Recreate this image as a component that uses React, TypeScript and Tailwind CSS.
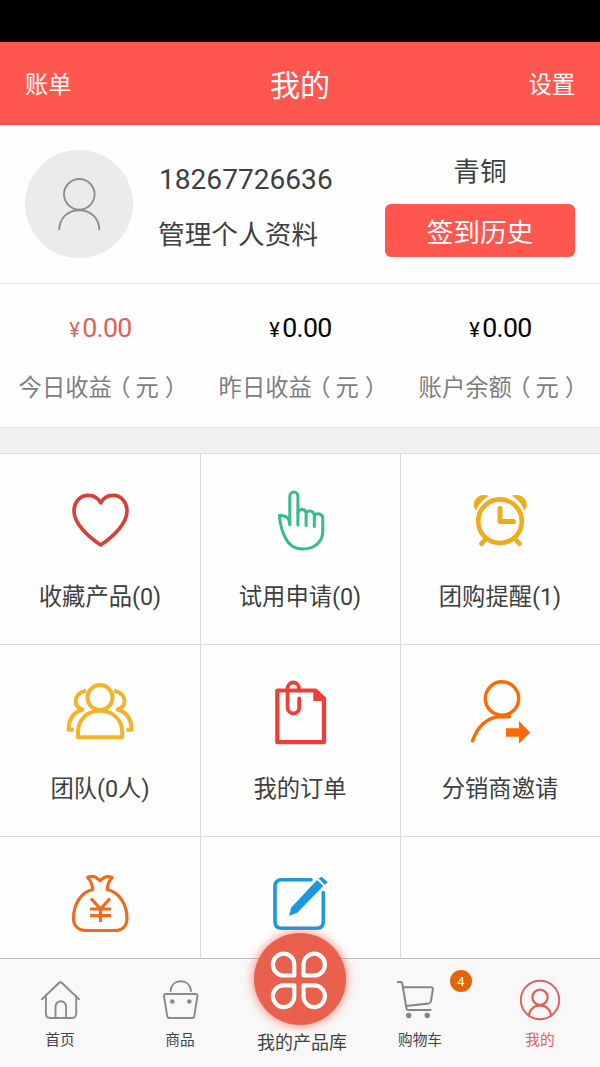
import type { ReactNode } from "react";

const FONT = "font-['Roboto','Noto_Sans_CJK_SC',sans-serif]";

function Glyph({ box, className, children }: { box: string; className: string; children: ReactNode }) {
  return (
    <svg viewBox={box} className={className} fill="none" stroke="currentColor" strokeLinecap="round" strokeLinejoin="round">
      {children}
    </svg>
  );
}

const tiles: { label: string; color: string; box: string; art: ReactNode }[] = [
  {
    label: "收藏产品(0)",
    color: "text-[#d93f38]",
    box: "60 480 80 80",
    art: (
      <path
        strokeWidth="3.6"
        d="M100.7 503C98 497.5 93.5 495.4 88.3 495.4C79.5 495.4 74 502.6 74 511C74 523.5 88 536.5 100.7 545C113.5 536.5 127 523.5 127 511C127 502.6 121.8 495.4 113 495.4C107.9 495.4 103.4 497.5 100.7 503Z"
      />
    ),
  },
  {
    label: "试用申请(0)",
    color: "text-[#35bd83]",
    box: "260 480 80 80",
    art: (
      <g strokeWidth="3">
        <path d="M289.8 524.5C289.6 518.5 286 514.8 279.3 515.6C280.2 523 282 531 284.5 536C288 544.5 294.5 549 303 549C315 549 322.8 541.5 322.8 531V519C322.8 512.5 314.3 512.5 314.3 516.5" />
        <path d="M289.8 524.5V496.3a4 4.2 0 0 1 8.1 0V525" />
        <path d="M297.9 513C298.5 508.5 306 508.3 306.1 513.5V525.5M306.1 513.5C307 509.8 314.3 510 314.3 516V526.5" />
      </g>
    ),
  },
  {
    label: "团购提醒(1)",
    color: "text-[#f2ab1d]",
    box: "460 480 80 80",
    art: (
      <g>
        <path
          fill="currentColor"
          stroke="none"
          d="M489 495.8C483 493.8 477.5 495.6 475 500C473 504 473.8 508 476.3 510.5C478.8 504 483 499 489 495.8ZM511.6 495.8C517.6 493.8 523.1 495.6 525.6 500C527.6 504 526.8 508 524.3 510.5C521.8 504 517.6 499 511.6 495.8Z"
        />
        <circle cx="500" cy="521.2" r="21.8" strokeWidth="4.6" />
        <path strokeWidth="5" d="M500 508.5V521.5H513.5" />
        <path strokeWidth="4.6" d="M485.5 539L481.5 543.7M515 539L519.5 543.7" />
      </g>
    ),
  },
  {
    label: "团队(0人)",
    color: "text-[#f3b32a]",
    box: "60 672 80 80",
    art: (
      <g strokeWidth="4">
        <circle cx="100" cy="697.5" r="12.5" />
        <path d="M78 737.3V732C78 720 87 710.8 100 710.8S122.2 720 122.2 732V737.3Z" />
        <path strokeLinecap="butt" d="M86 690.7C79 692 75.7 696.5 75.7 701C75.7 705 77.7 708 82.5 709.5C73 712.5 68.6 719 68.6 729.7H73.7" />
        <path strokeLinecap="butt" d="M114.2 690.7C121.2 692 124.5 696.5 124.5 701C124.5 705 122.5 708 117.7 709.5C127.2 712.5 131.6 719 131.6 729.7H126.5" />
      </g>
    ),
  },
  {
    label: "我的订单",
    color: "text-[#ee3f37]",
    box: "260 672 80 80",
    art: (
      <g>
        <path strokeWidth="4.2" d="M277.3 690.5H315.5L324 698.5V742.2H277.3Z" />
        <path fill="currentColor" stroke="none" d="M313.3 690V701H325V698L316 689Z" />
        <path strokeWidth="3.8" d="M299.2 698.5V707.5a5.8 6 0 0 1 -11.6 0V688.5a5.7 6 0 0 1 11.4 0" />
      </g>
    ),
  },
  {
    label: "分销商邀请",
    color: "text-[#fb6a05]",
    box: "460 672 80 80",
    art: (
      <g>
        <circle cx="502" cy="698.5" r="16.7" strokeWidth="3.4" />
        <path strokeWidth="3.4" d="M472.5 740.8C477.5 727 487 716.7 501 716.7H509.5" />
        <path fill="currentColor" stroke="none" d="M506 728.3H519V721L530.2 732.4L519 743.7V736.7H506Z" />
      </g>
    ),
  },
  {
    label: "",
    color: "text-[#f06a1c]",
    box: "60 864 80 80",
    art: (
      <g strokeWidth="3.2">
        <path d="M92.8 889.5C92.3 885 90.5 880.5 87.7 877.5C91 876 95 876 98.3 879.3L100 880.7L101.7 879.3C105 876 108.5 876 112 877.5C109.2 880.5 107.5 885 107.2 889.5C119 892 127 904.5 127 918.5C127 926 122.5 930.5 114.5 930.5H86.5C78.5 930.5 73.5 926 73.5 918.5C73.5 904.5 81 892 92.8 889.5Z" />
        <path strokeWidth="3.2" strokeLinecap="butt" d="M91 898.5L100.5 909L110 898.5M100.5 908V922M90 909H111M90 915.7H111" />
      </g>
    ),
  },
  {
    label: "",
    color: "text-[#1d97dd]",
    box: "260 864 80 80",
    art: (
      <g>
        <path strokeWidth="3.6" d="M311 879.8H282C277.5 879.8 275 882 275 886.5V921.5C275 926 277.5 928.3 282 928.3H316.5C321 928.3 323.3 926 323.3 921.5V892.5" />
        <path
          fill="currentColor"
          stroke="none"
          d="M289 915.7L291.3 907.5L317 880L323.3 886L297 913ZM318.7 878.5L321.5 876.7L327.7 882L325 885Z"
        />
      </g>
    ),
  },
  { label: "", color: "", box: "460 864 80 80", art: null },
];

const stats = [
  { label: "今日收益", color: "text-[#e0605a]" },
  { label: "昨日收益", color: "text-black" },
  { label: "账户余额", color: "text-black" },
];

function NavItem({ label, tone, box, children }: { label: string; tone: string; box: string; children: ReactNode }) {
  return (
    <div className={`flex flex-1 flex-col items-center pt-[13px] ${tone}`}>
      <Glyph box={box} className="h-[56px] w-[60px]">
        {children}
      </Glyph>
      <span className={`mt-[2px] text-[14.7px] leading-5 ${tone === "text-[#e0605a]" ? "" : "text-[#444]"}`}>{label}</span>
    </div>
  );
}

export default function App() {
  return (
    <div className={`flex h-[1067px] w-[600px] flex-col overflow-hidden bg-[#fefefe] text-[#3e3f41] ${FONT}`}>
      <div className="h-[42px] shrink-0 bg-black" />
      <header className="grid h-[83px] shrink-0 grid-cols-3 items-center bg-[#ff564e] px-[25px] pt-[4px] text-[23.3px] text-white">
        <span>账单</span>
        <h1 className="text-center text-[30px]">我的</h1>
        <span className="text-right">设置</span>
      </header>

      <section className="flex h-[159px] shrink-0 border-b border-[#e6e6e6] pl-[25px] pr-[25px]">
        <div className="mt-[25px] flex size-[108px] rounded-full bg-[#ebebeb] text-[#8c8d92]">
          <Glyph box="25 150 108 108" className="size-[108px]">
            <circle cx="79.3" cy="194.3" r="15.3" strokeWidth="1.9" />
            <path strokeWidth="1.9" strokeLinecap="butt" d="M59.2 230C59.2 218 68 210.2 79.3 210.2S99.3 218 99.3 230" />
          </Glyph>
        </div>
        <div className="ml-[25px] flex flex-1 flex-col pt-[35px]">
          <span className="pl-px text-[28.1px] leading-[40px]">18267726636</span>
          <span className="mt-[15px] text-[26.7px] leading-[40px]">管理个人资料</span>
        </div>
        <div className="flex w-[190px] flex-col items-center pt-[27px] text-[26.7px]">
          <span className="leading-[40px]">青铜</span>
          <button className="mt-[12px] h-[53px] w-full rounded-[6px] bg-[#ff564e] pt-[6px] leading-[47px] text-white">签到历史</button>
        </div>
      </section>

      <section className="grid h-[143px] shrink-0 grid-cols-3">
        {stats.map((s) => (
          <div key={s.label} className="flex flex-col items-center pt-[24px]">
            <span className={`pl-px text-[26.7px] leading-[40px] tracking-[-0.6px] ${s.color}`}>
              <span className="mr-[3px] text-[20px]">¥</span>0.00
            </span>
            <span className="mt-[18px] whitespace-nowrap text-[23.3px] leading-[40px] text-[#7e7e7e]">
              {s.label}
              <span className="ml-[7px] mr-[5px] [font-feature-settings:'halt']">（</span>元
              <span className="ml-[6px] mr-[5px] [font-feature-settings:'halt']">）</span>
            </span>
          </div>
        ))}
      </section>

      <div className="h-[27px] shrink-0 border-y border-[#dedede] bg-[#f0f0f0]" />

      <main className="grid min-h-0 flex-1 auto-rows-[192px] grid-cols-[201px_200px_199px] grid-rows-[191px] overflow-hidden">
        {tiles.map((t, i) => (
          <div
            key={i}
            className={`flex flex-col items-center border-b border-[#dcdcdc] ${i < 3 ? "pt-[26px]" : "pt-[27px]"} ${i % 3 < 2 ? "border-r" : ""} ${i % 3 > 0 ? "pr-px" : ""} ${t.color}`}
          >
            <Glyph box={t.box} className="size-[80px]">
              {t.art}
            </Glyph>
            <span className="mt-[17px] text-[23.3px] leading-[40px] text-[#3e3f41]">{t.label}</span>
          </div>
        ))}
      </main>

      <nav className="flex h-[109px] shrink-0 border-t border-[#bdbdbd] bg-[#f8f8f8]">
        <NavItem label="首页" tone="text-[#8b8b8b]" box="30 972 60 56">
          <g strokeWidth="1.9">
            <path d="M42 999.3L58.8 983Q60.4 981.7 62 983L79 999.3" />
            <path d="M45.9 996V1013.5Q45.9 1018 50.5 1018H71.7Q76.2 1018 76.2 1013.5V996" />
            <path d="M55.5 1018V1006.5a5.3 5.3 0 0 1 10.6 0V1018" />
          </g>
        </NavItem>
        <NavItem label="商品" tone="text-[#8b8b8b]" box="150 972 60 56">
          <g strokeWidth="1.9">
            <path d="M165.5 994H195.5Q197.7 994 197.4 996L194.3 1016Q194 1018 192 1018H169.5Q167.5 1018 167.2 1016L164 996Q163.7 994 165.5 994Z" />
            <path d="M170.6 991C171 985 175 981.3 180.7 981.3S190.4 985 191 991" />
            <circle cx="172.3" cy="1001.5" r="2.3" fill="currentColor" stroke="none" />
            <circle cx="189.3" cy="1001.5" r="2.3" fill="currentColor" stroke="none" />
          </g>
        </NavItem>
        <div className="flex flex-1 flex-col items-center">
          <div className="z-10 -mt-[26px] flex size-[92px] shrink-0 rounded-full bg-[#e9604c] text-white shadow-[0_0_8px_2px_rgba(255,100,80,0.6)]">
            <Glyph box="254 933 92 92" className="size-[92px]">
              <g strokeWidth="4.2">
                <path d="M294.3 975.5H283.8A10.7 10.9 0 1 1 294.3 964.6Z" />
                <path d="M303.5 975.5H314A10.7 10.9 0 1 0 303.5 964.6Z" />
                <path d="M294.3 985.3H283.8A10.7 10.9 0 1 0 294.3 996.2Z" />
                <path d="M303.5 985.3H314A10.7 10.9 0 1 1 303.5 996.2Z" />
              </g>
            </Glyph>
          </div>
          <span className="mt-[5px] whitespace-nowrap pl-[4px] text-[18px] leading-[26px] text-[#3e3f41]">我的产品库</span>
        </div>
        <div className="relative flex flex-1">
          <NavItem label="购物车" tone="text-[#858585]" box="390 972 60 56">
            <g strokeWidth="2">
              <path d="M397.7 982H400.5Q402 982 402.3 983.5L406.5 1008.5Q406.8 1010 408.5 1010H430.5" />
              <path d="M403.3 987.2H431Q433.2 987.2 432.9 989.2L431 1001.2Q430.7 1003.2 428.8 1003.4L406 1006" />
              <circle cx="408.7" cy="1015.5" r="2.7" fill="currentColor" stroke="none" />
              <circle cx="427.3" cy="1015.5" r="2.7" fill="currentColor" stroke="none" />
            </g>
          </NavItem>
          <span className="absolute left-[90px] top-[11px] size-[22px] rounded-full bg-[#e66503] text-center text-[13px] leading-[23px] text-white">
            4
          </span>
        </div>
        <NavItem label="我的" tone="text-[#e0605a]" box="510 972 60 56">
          <circle cx="540" cy="1000" r="19.2" strokeWidth="1.9" />
          <circle cx="540" cy="997.3" r="7.6" strokeWidth="2.3" />
          <path strokeWidth="2.3" d="M529 1015.5C529.5 1009.5 534 1005.5 540 1005.5S550.5 1009.5 551 1015.5" />
        </NavItem>
      </nav>
    </div>
  );
}
